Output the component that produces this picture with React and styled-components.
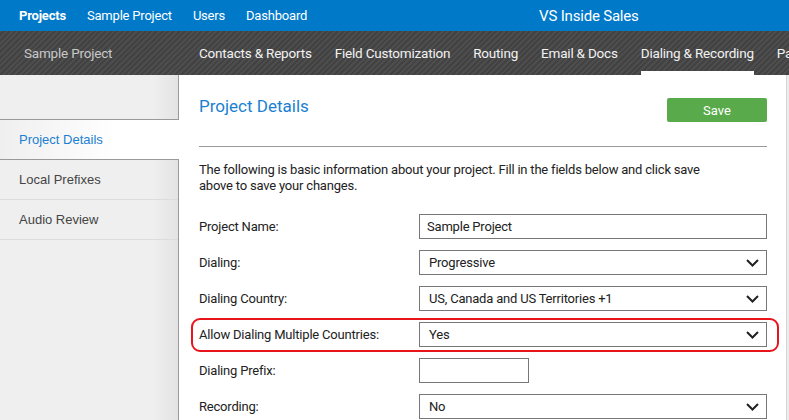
import React from "react";
import styled, { createGlobalStyle } from "styled-components";

const Global = createGlobalStyle`
  html, body { margin: 0; padding: 0; background: #fff; }
  body { font-family: Roboto, "Liberation Sans", sans-serif; overflow: hidden; }
  * { box-sizing: border-box; }
`;

const Page = styled.div`
  width: 789px;
  height: 420px;
  display: flex;
  flex-direction: column;
  overflow: hidden;
`;

const TopBar = styled.div`
  height: 31px;
  flex-shrink: 0;
  background: #0079c9;
  display: flex;
  align-items: center;
  padding-left: 19px;
  color: #fff;
  font-size: 13px;
  letter-spacing: -0.2px;
  white-space: nowrap;
`;

const TopLink = styled.span`
  margin-right: 21px;
  font-weight: ${(p) => (p.$bold ? 700 : 400)};
`;

const Brand = styled.span`
  margin-left: 211px;
  font-size: 15px;
`;

const SubNav = styled.div`
  height: 44px;
  flex-shrink: 0;
  display: flex;
  align-items: stretch;
  overflow: hidden;
  background-color: #474747;
  background-image: repeating-linear-gradient(
    135deg,
    #4d4d4d 0px,
    #4d4d4d 2px,
    #424242 2px,
    #424242 4px
  );
  color: #f2f2f2;
  font-size: 13.5px;
  letter-spacing: -0.2px;
  white-space: nowrap;
`;

const SubTitle = styled.div`
  width: 199px;
  flex-shrink: 0;
  padding-left: 24px;
  display: flex;
  align-items: center;
  color: #c8c8c8;
`;

const SubItem = styled.div`
  flex-shrink: 0;
  margin-right: 23px;
  display: flex;
  align-items: center;
  border-bottom: 4px solid ${(p) => (p.$active ? "#fff" : "transparent")};
  padding-top: 4px;
`;

const Body = styled.div`
  flex: 1;
  display: flex;
  min-height: 0;
`;

const Sidebar = styled.div`
  width: 179px;
  flex-shrink: 0;
  display: flex;
  flex-direction: column;
  background: linear-gradient(to right, #efefef 86%, #e3e3e3);
  border-right: 1px solid #999;
  font-family: "Liberation Sans", Arial, sans-serif;
  font-size: 13px;
`;

const SideTop = styled.div`
  height: 45px;
  border-bottom: 1px solid #999;
`;

const SideItem = styled.div`
  height: 40px;
  display: flex;
  align-items: center;
  padding-left: 19px;
  color: ${(p) => (p.$active ? "#1a7fd0" : "#444")};
  border-bottom: 1px solid ${(p) => (p.$active ? "#999" : "#dcdcdc")};
  ${(p) =>
    p.$active &&
    `
    background: linear-gradient(to right, #efefef, #ffffff 65%);
    margin-right: -1px;
  `}
`;

const Main = styled.div`
  flex: 1;
  background: #fff;
  padding: 23px 19px 0 20px;
  border-right: 1px solid #d6d6d6;
  font-size: 13px;
  letter-spacing: -0.2px;
  color: #222;
`;

const Gutter = styled.div`
  width: 2px;
  background: #ececec;
`;

const Header = styled.div`
  display: flex;
  justify-content: space-between;
  align-items: flex-start;
  padding-bottom: 24px;
  border-bottom: 1px solid #999;
`;

const Title = styled.h1`
  margin: -2px 0 0;
  font-size: 17px;
  line-height: 20px;
  font-weight: 400;
  letter-spacing: 0;
  color: #1a7fd0;
`;

const SaveButton = styled.button`
  width: 100px;
  height: 24px;
  border: none;
  border-radius: 2px;
  background: #59aa4a;
  color: #fff;
  font-family: inherit;
  font-size: 13px;
  padding: 0;
`;

const Intro = styled.p`
  margin: 15px 0 20px;
  line-height: 16px;
`;

const Form = styled.div`
  display: grid;
  grid-template-columns: 220px 1fr;
  row-gap: 11px;
  align-items: center;
`;

const Row = styled.div`
  display: contents;
`;

const Label = styled.div`
  position: relative;
  ${(p) =>
    p.$highlight &&
    `
    &::after {
      content: "";
      position: absolute;
      left: -8px;
      top: -9px;
      bottom: -10px;
      width: 584px;
      border: 2px solid #e8141b;
      border-radius: 9px;
      pointer-events: none;
    }
  `}
`;

const Field = styled.div`
  height: 25px;
  width: ${(p) => (p.$narrow ? "110px" : "100%")};
  border: 1px solid #777;
  display: flex;
  align-items: center;
  justify-content: space-between;
  padding: 0 7px 0 ${(p) => (p.$select ? "9px" : "7px")};
  background: #fff;
`;

const Chevron = () => (
  <svg width="13" height="8" viewBox="0 0 13 8">
    <polyline points="1,1 6.5,6.5 12,1" fill="none" stroke="#222" strokeWidth="2" />
  </svg>
);

const rows = [
  { label: "Project Name:", value: "Sample Project" },
  { label: "Dialing:", value: "Progressive", select: true },
  { label: "Dialing Country:", value: "US, Canada and US Territories +1", select: true },
  { label: "Allow Dialing Multiple Countries:", value: "Yes", select: true, highlight: true },
  { label: "Dialing Prefix:", value: "", narrow: true },
  { label: "Recording:", value: "No", select: true },
];

export default function App() {
  return (
    <Page>
      <Global />
      <TopBar>
        <TopLink $bold>Projects</TopLink>
        <TopLink>Sample Project</TopLink>
        <TopLink>Users</TopLink>
        <TopLink>Dashboard</TopLink>
        <Brand>VS Inside Sales</Brand>
      </TopBar>
      <SubNav>
        <SubTitle>Sample Project</SubTitle>
        <SubItem>Contacts &amp; Reports</SubItem>
        <SubItem>Field Customization</SubItem>
        <SubItem>Routing</SubItem>
        <SubItem>Email &amp; Docs</SubItem>
        <SubItem $active>Dialing &amp; Recording</SubItem>
        <SubItem>Pages</SubItem>
      </SubNav>
      <Body>
        <Sidebar>
          <SideTop />
          <SideItem $active>Project Details</SideItem>
          <SideItem>Local Prefixes</SideItem>
          <SideItem>Audio Review</SideItem>
        </Sidebar>
        <Main>
          <Header>
            <Title>Project Details</Title>
            <SaveButton>Save</SaveButton>
          </Header>
          <Intro>
            The following is basic information about your project. Fill in the fields below and click save
            <br />
            above to save your changes.
          </Intro>
          <Form>
            {rows.map((r) => (
              <Row key={r.label}>
                <Label $highlight={r.highlight}>{r.label}</Label>
                <Field $narrow={r.narrow} $select={r.select}>
                  <span>{r.value}</span>
                  {r.select && <Chevron />}
                </Field>
              </Row>
            ))}
          </Form>
        </Main>
        <Gutter />
      </Body>
    </Page>
  );
}
